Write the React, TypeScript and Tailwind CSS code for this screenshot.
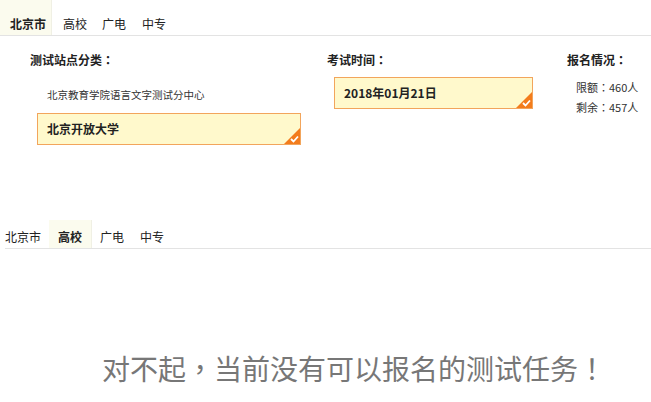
import React from "react";

// fullwidth punctuation sits centred in the TC face, like the reference
function P({ c }: { c: string }) {
  return <span className="font-['Noto_Sans_CJK_TC',sans-serif]">{c}</span>;
}

function Tabs({ active, second }: { active: number; second?: boolean }) {
  const items = ["北京市", "高校", "广电", "中专"];
  return (
    <div className={`flex border-b border-[#e3e3e3] ${second ? "ml-[5px] h-[29px]" : "h-[36px]"}`}>
      {items.map((t, i) => {
        let pad = "px-[8px]";
        if (!second && i === 0) pad = "pl-[10px] pr-[5px]";
        if (!second && i === 1) pad = "pl-[11px] pr-[7px]";
        if (!second && i > 1) pad = "px-[8px]";
        if (second && i === 0) pad = "pl-0 pr-[8px]";
        if (second && i === 1) pad = "px-[9px]";
        return (
          <div
            key={t}
            className={`flex items-end text-[12px] leading-[16px] text-[#222] ${pad} ${
              i === active ? "bg-[#fbfbee] font-bold border-r border-[#f0f0e4]" : ""
            }`}
          >
            <span className="pb-[3px]">{t}</span>
          </div>
        );
      })}
    </div>
  );
}

function Picked({ text, w }: { text: string; w: string }) {
  return (
    <div
      className={`relative ${w} h-[32px] bg-[#fff9cc] border border-[#f2a55c] flex items-center pl-[9px] text-[12px] font-bold text-[#222]`}
    >
      {text}
      <svg className="absolute right-0 bottom-0" width="16" height="16" viewBox="0 0 16 16">
        <polygon points="16,0 16,16 0,16" fill="#f37c1c" />
        <polyline points="7,11 9.5,13.5 14,8.5" fill="none" stroke="#fff" strokeWidth="1.8" />
      </svg>
    </div>
  );
}

export default function App() {
  return (
    <div className="w-[651px] h-[402px] bg-white overflow-hidden font-['Noto_Sans_CJK_SC',sans-serif]">
      <Tabs active={0} />

      <div className="h-[184px] flex pl-[30px] pt-[15px]">
        <div className="w-[297px]">
          <div className="text-[12px] font-bold text-[#222] leading-[18px]">
            测试站点分类<P c="：" />
          </div>
          <div className="mt-[18px] ml-[17px] text-[10.5px] text-[#333] leading-[16px]">
            北京教育学院语言文字测试分中心
          </div>
          <div className="mt-[10px] ml-[7px]">
            <Picked text="北京开放大学" w="w-[264px]" />
          </div>
        </div>
        <div className="w-[240px]">
          <div className="text-[12px] font-bold text-[#222] leading-[18px]">
            考试时间<P c="：" />
          </div>
          <div className="mt-[8px] ml-[7px]">
            <Picked text="2018年01月21日" w="w-[199px]" />
          </div>
        </div>
        <div>
          <div className="text-[12px] font-bold text-[#222] leading-[18px]">
            报名情况<P c="：" />
          </div>
          <div className="ml-[9px] mt-[8px] text-[11px] text-[#333] leading-[20px]">
            <div>
              限额<P c="：" />460人
            </div>
            <div>
              剩余<P c="：" />457人
            </div>
          </div>
        </div>
      </div>

      <Tabs active={1} second />

      <div className="pt-[99px] pl-[102px] text-[28px] text-[#777] leading-[40px]">
        对不起<P c="，" />当前没有可以报名的测试任务<P c="！" />
      </div>
    </div>
  );
}
